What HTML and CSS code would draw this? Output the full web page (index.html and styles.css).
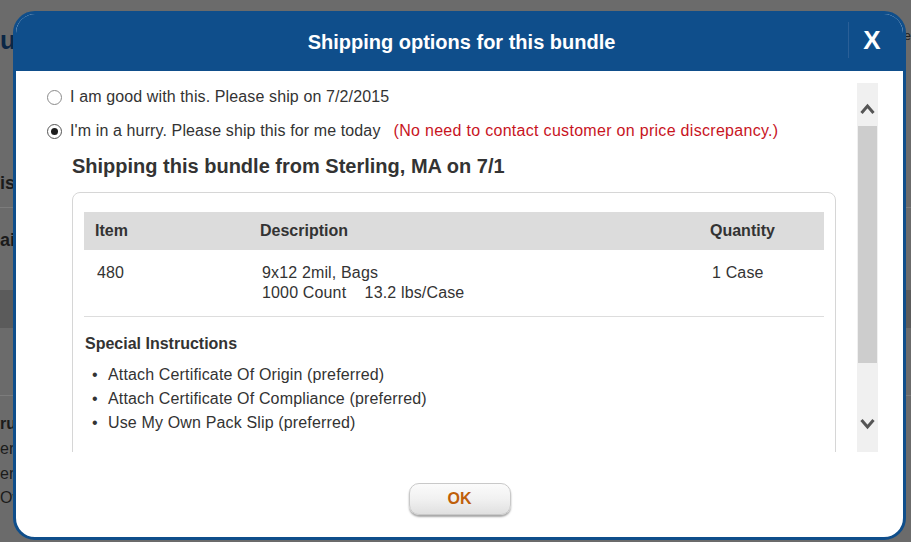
FILE: index.html
```html
<!DOCTYPE html>
<html>
<head>
<meta charset="utf-8">
<link rel="stylesheet" href="styles.css">
</head>
<body>
<div class="page">
  <div class="bg-top"><span class="bg-logo">ut</span><span class="bg-welcome">e</span></div>
  <div class="bg-gap1"></div>
  <div class="bg-h bg-this">is</div>
  <div class="bg-rule1"></div>
  <div class="bg-h bg-detail">ai</div>
  <div class="bg-gap2"></div>
  <div class="bg-band"></div>
  <div class="bg-rule2"></div>
  <div class="bg-instr">ru</div>
  <div class="bg-line">ert</div>
  <div class="bg-line">ert</div>
  <div class="bg-line">Ow</div>
</div>

<div class="modal">
  <div class="modal-head">
    <div class="modal-title">Shipping options for this bundle</div>
    <div class="modal-close">X</div>
  </div>
  <div class="modal-body">
    <div class="scroll">
      <div class="scroll-content">
        <div class="opts">
          <div class="opt"><span class="radio"></span><span>I am good with this. Please ship on 7/2/2015</span></div>
          <div class="opt"><span class="radio checked"></span><span>I'm in a hurry. Please ship this for me today</span><span class="note">(No need to contact customer on price discrepancy.)</span></div>
        </div>
        <h2 class="ship-head">Shipping this bundle from Sterling, MA on 7/1</h2>
        <div class="card">
          <div class="tbl">
            <div class="th">Item</div>
            <div class="th">Description</div>
            <div class="th">Quantity</div>
            <div class="td">480</div>
            <div class="td">9x12 2mil, Bags<br>1000 Count&nbsp;&nbsp;&nbsp;&nbsp;13.2 lbs/Case</div>
            <div class="td">1 Case</div>
          </div>
          <div class="instr">
            <div class="instr-title">Special Instructions</div>
            <ul class="instr-list">
              <li>Attach Certificate Of Origin (preferred)</li>
              <li>Attach Certificate Of Compliance (preferred)</li>
              <li>Use My Own Pack Slip (preferred)</li>
            </ul>
          </div>
        </div>
      </div>
      <div class="sbar">
        <div class="sb-up">
          <svg width="15" height="12" viewBox="0 0 15 12"><polyline points="1.5,10 7.5,3 13.5,10" fill="none" stroke="#555" stroke-width="3"/></svg>
        </div>
        <div class="sb-thumb"></div>
        <div class="sb-down">
          <svg width="15" height="12" viewBox="0 0 15 12"><polyline points="1.5,2 7.5,9 13.5,2" fill="none" stroke="#555" stroke-width="3"/></svg>
        </div>
      </div>
    </div>
    <div class="foot"><button class="ok">OK</button></div>
  </div>
</div>
</body>
</html>
```
FILE: styles.css
```css
html, body {
  margin: 0;
  padding: 0;
}
body {
  width: 911px;
  height: 542px;
  overflow: hidden;
  position: relative;
  font-family: "Liberation Sans", Arial, sans-serif;
  color: #333;
}

/* dimmed page behind the dialog */
.page {
  height: 542px;
  background: #6b6b6b;
  overflow: hidden;
  color: #1b1b1b;
}
.bg-top {
  height: 80px;
  line-height: 80px;
  display: flex;
  justify-content: space-between;
}
.bg-logo {
  font-size: 26px;
  font-weight: bold;
  color: #0b2746;
}
.bg-welcome {
  font-size: 13px;
  color: #222;
  line-height: 72px;
}
.bg-gap1 { height: 85px; }
.bg-h {
  font-size: 18px;
  font-weight: bold;
  white-space: nowrap;
}
.bg-this {
  height: 36px;
  line-height: 36px;
}
.bg-rule1 {
  height: 6px;
  border-bottom: 1px solid #7c7c7c;
}
.bg-detail {
  height: 64px;
  line-height: 64px;
}
.bg-gap2 { height: 18px; }
.bg-band {
  height: 38px;
  background: #5b5b5b;
}
.bg-rule2 {
  height: 67px;
  border-bottom: 1px solid #7c7c7c;
}
.bg-instr {
  padding-top: 16px;
  line-height: 24px;
  font-size: 16px;
  font-weight: bold;
  white-space: nowrap;
}
.bg-line {
  line-height: 24.5px;
  font-size: 16px;
}
.bg-instr + .bg-line { margin-top: 1px; }

/* dialog */
.modal {
  position: absolute;
  left: 13px;
  top: 11px;
  width: 887px;
  border: 3px solid #0f4e8b;
  border-radius: 22px;
  background: #fff;
  overflow: hidden;
}
.modal-head {
  height: 57px;
  background: #0f4e8b;
  display: flex;
  padding-left: 59px;
}
.modal-title {
  flex: 1;
  text-align: center;
  color: #fff;
  font-size: 20px;
  font-weight: bold;
  line-height: 57px;
}
.modal-close {
  width: 55px;
  height: 36px;
  margin-top: 8px;
  border-left: 1px solid #2a5f97;
  color: #fff;
  font-size: 26px;
  font-weight: bold;
  line-height: 36px;
  text-align: center;
  padding-right: 8px;
  box-sizing: border-box;
}
.modal-body {
  padding: 12px 25px 22px 31px;
}
.scroll {
  display: flex;
  height: 369px;
}
.scroll-content {
  flex: 1;
  overflow: hidden;
  font-size: 16px;
}
.opts {
  padding-top: 4px;
  display: flex;
  flex-direction: column;
  gap: 14px;
}
.opt {
  display: flex;
  align-items: center;
  height: 20px;
  line-height: 20px;
  letter-spacing: 0.12px;
}
.radio {
  width: 13px;
  height: 13px;
  border: 1px solid #8a8a8a;
  border-radius: 50%;
  margin-right: 8px;
  display: flex;
  align-items: center;
  justify-content: center;
  background: #fff;
}
.radio.checked {
  border-color: #555;
}
.radio.checked::after {
  content: "";
  width: 7px;
  height: 7px;
  border-radius: 50%;
  background: #1e1e1e;
}
.note {
  color: #c8141e;
  margin-left: 13px;
  letter-spacing: 0.3px;
}
.ship-head {
  margin: 13px 0 14px 25px;
  font-size: 20px;
  line-height: 24px;
  font-weight: bold;
  color: #333;
}
.card {
  margin: 0 21px 0 25px;
  border: 1px solid #d6d6d6;
  border-radius: 8px;
  padding: 19px 11px 40px 11px;
}
.tbl {
  display: grid;
  grid-template-columns: 164px 450px 1fr;
  border-bottom: 1px solid #dddddd;
}
.th {
  background: #dcdcdc;
  height: 38px;
  line-height: 38px;
  padding-left: 12px;
  font-weight: bold;
  color: #333;
}
.th:first-child { padding-left: 11px; }
.td {
  padding: 13px 0 13px 14px;
  line-height: 20px;
  letter-spacing: 0.15px;
}
.td:nth-child(4) { padding-left: 13px; }
.instr {
  padding: 17px 0 0 1px;
}
.instr-title {
  font-weight: bold;
  line-height: 20px;
}
.instr-list {
  list-style: none;
  margin: 9px 0 0 0;
  padding: 0;
}
.instr-list li {
  display: flex;
  line-height: 24px;
  letter-spacing: 0.15px;
}
.instr-list li::before {
  content: "\2022";
  width: 16px;
  margin-left: 7px;
  flex: none;
}
.sbar {
  width: 21px;
  background: #f0f0f0;
  display: flex;
  flex-direction: column;
  align-items: center;
}
.sb-up {
  height: 43px;
  padding-top: 20px;
  box-sizing: border-box;
}
.sb-up svg, .sb-down svg { display: block; }
.sb-thumb {
  width: 19px;
  height: 237px;
  background: #cdcdcd;
}
.sb-down {
  padding-top: 55px;
}
.foot {
  display: flex;
  justify-content: center;
  margin-top: 31px;
  margin-left: -31px;
  margin-right: -25px;
}
.ok {
  width: 102px;
  height: 32px;
  border: 1px solid #c9c9c9;
  border-radius: 10px;
  background: linear-gradient(#fbfbfb, #f1f1f1 50%, #e0e0e0);
  box-shadow: 0 2px 2px rgba(0, 0, 0, 0.35);
  font-family: "Liberation Sans", Arial, sans-serif;
  font-size: 16px;
  font-weight: bold;
  color: #bf5f0a;
  padding: 0;
}
```
